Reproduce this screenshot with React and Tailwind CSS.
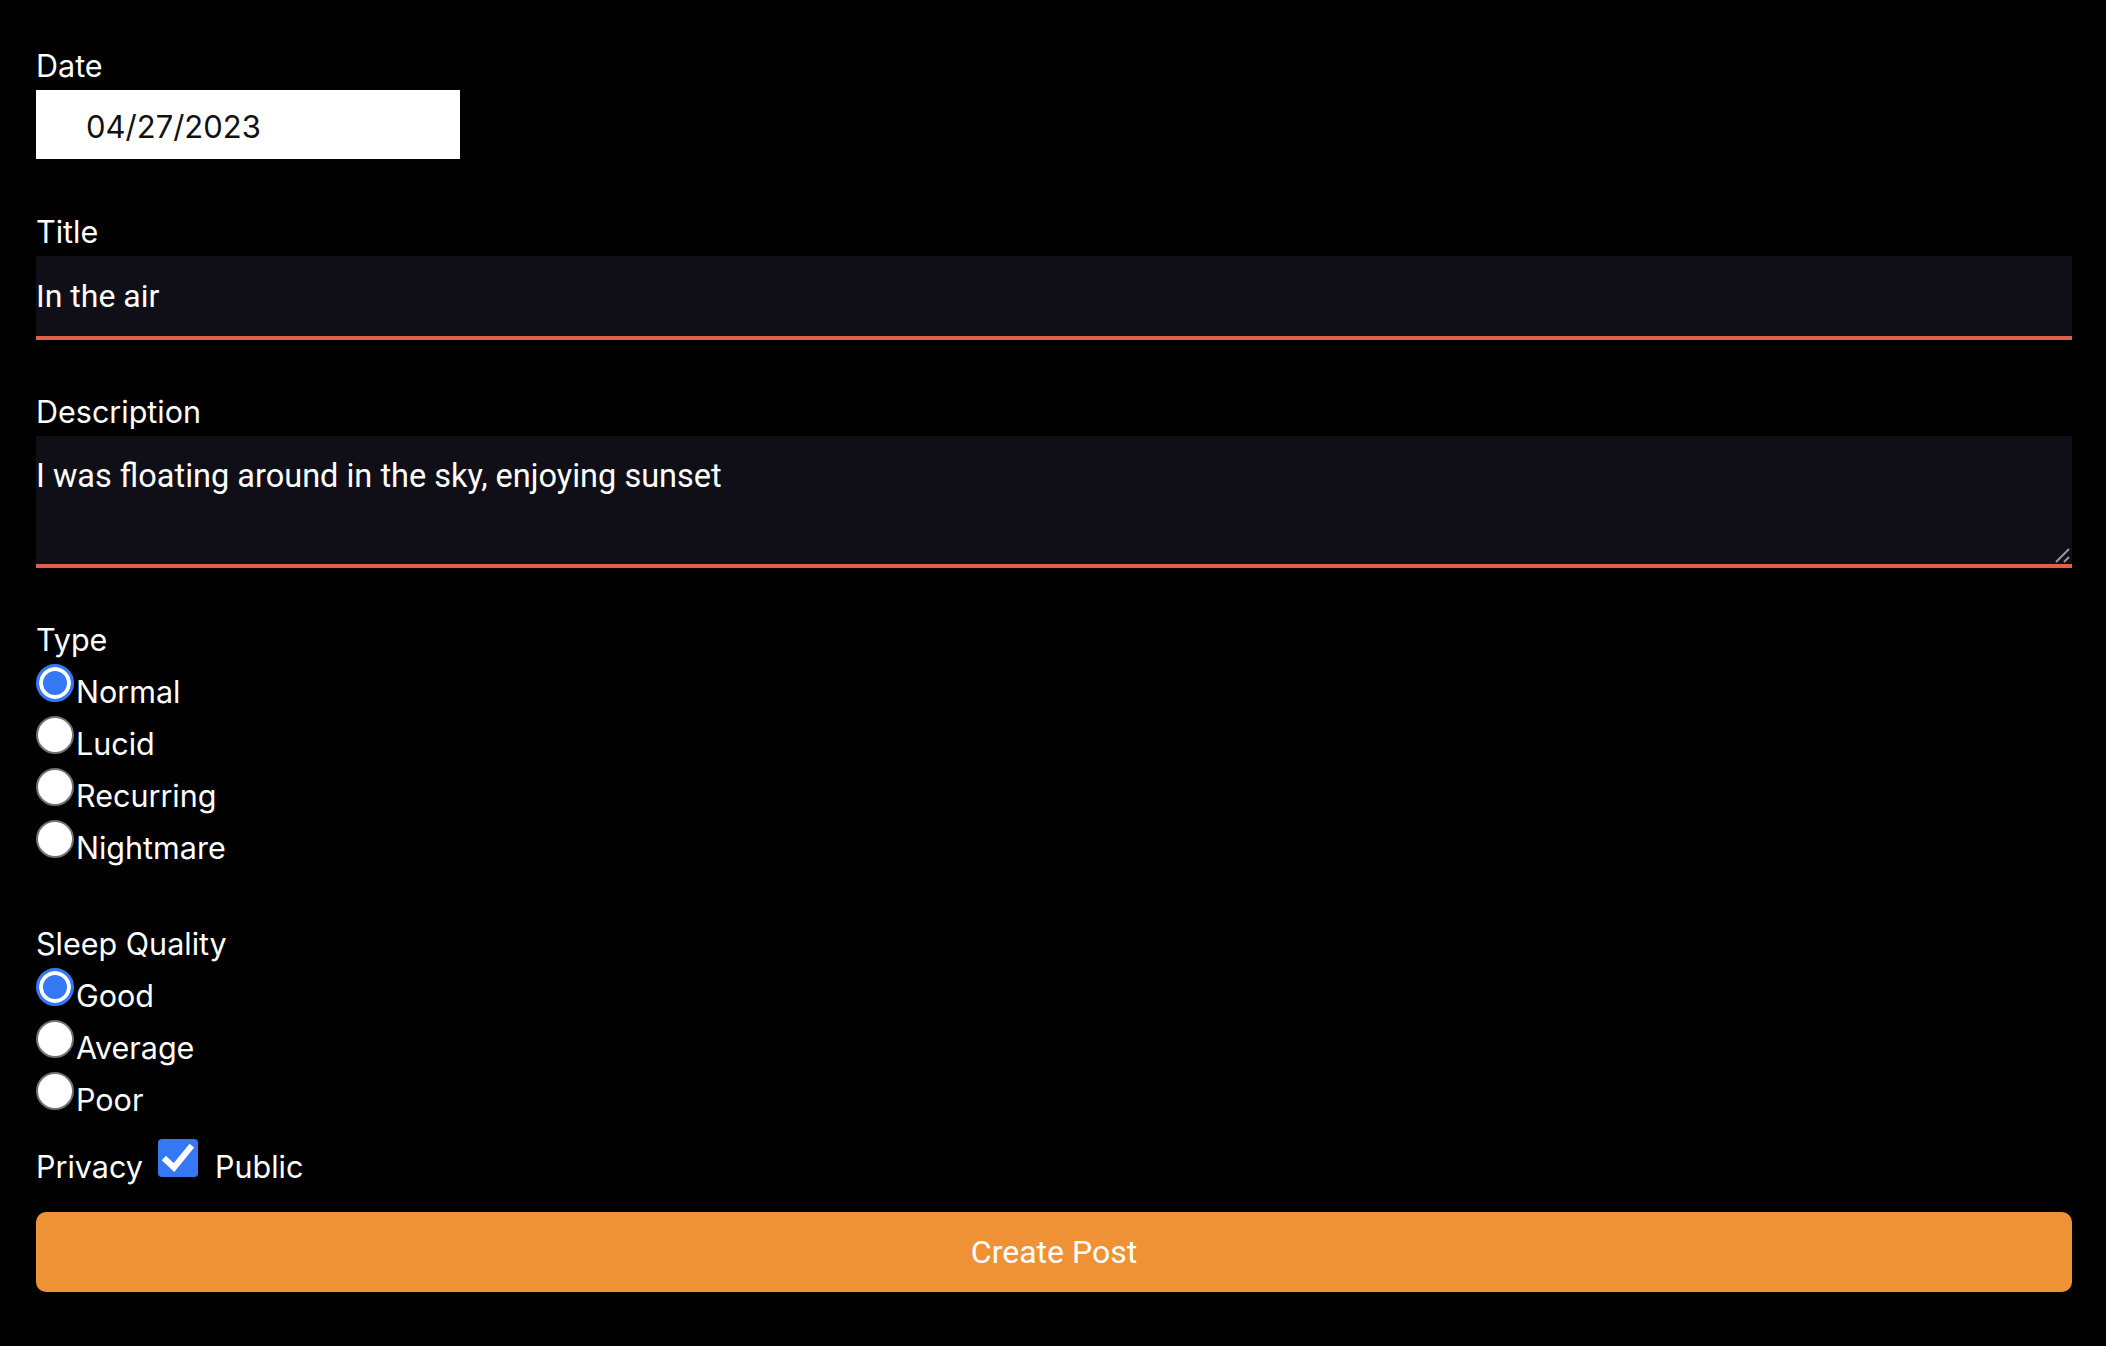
import React from "react";

function Radio({ label, checked, name }) {
  return (
    <label className="flex items-start h-[52px]">
      <input
        type="radio"
        name={name}
        defaultChecked={checked}
        className="appearance-none m-0 shrink-0 w-[38px] h-[38px] rounded-full bg-white border-2 border-[#707070] checked:border-[3px] checked:border-[#3478f6] checked:bg-[#3478f6] checked:shadow-[inset_0_0_0_4px_#ffffff]"
      />
      <span className="ml-[2px] mt-[4px] leading-[48px] text-[30.5px] text-white">{label}</span>
    </label>
  );
}

export default function App() {
  return (
    <div className="h-[1346px] overflow-hidden bg-black pl-[36px] pr-[34px] pt-[42px] font-[Inter,sans-serif] text-white">
      <div className="flex flex-col">
        <label className="text-[30.5px] leading-[48px]">Date</label>
        <input
          readOnly
          value="04/27/2023"
          className="w-[424px] h-[69px] bg-white text-[#111111] text-[31px] pl-[50px] pt-[3px] outline-none font-[Inter,sans-serif]"
        />

        <label className="mt-[49px] text-[30.5px] leading-[48px]">Title</label>
        <input
          defaultValue="In the air"
          className="w-full h-[84px] bg-[#100f17] border-b-4 border-[#e0604c] py-[16px] px-0 text-[32px] leading-[48px] text-white outline-none font-[Roboto,sans-serif]"
        />

        <label className="mt-[48px] text-[30.5px] leading-[48px]">Description</label>
        <div className="relative">
          <textarea
            rows={2}
            defaultValue="I was floating around in the sky, enjoying sunset"
            className="block w-full h-[132px] resize-none bg-[#100f17] border-b-4 border-[#e0604c] py-[16px] px-0 text-[32.5px] leading-[48px] text-white outline-none font-[Roboto,sans-serif]"
          />
          <svg className="absolute right-[2px] bottom-[5px] w-[16px] h-[16px]" viewBox="0 0 16 16">
            <line x1="2" y1="15" x2="15" y2="2" stroke="#9a9a9a" strokeWidth="2" />
            <line x1="10" y1="15" x2="15" y2="10" stroke="#9a9a9a" strokeWidth="2" />
          </svg>
        </div>

        <span className="mt-[48px] text-[30.5px] leading-[48px]">Type</span>
        <div className="flex flex-col">
          <Radio name="type" label="Normal" checked />
          <Radio name="type" label="Lucid" />
          <Radio name="type" label="Recurring" />
          <Radio name="type" label="Nightmare" />
        </div>

        <span className="mt-[48px] text-[30.5px] leading-[48px]">Sleep Quality</span>
        <div className="flex flex-col">
          <Radio name="sleep" label="Good" checked />
          <Radio name="sleep" label="Average" />
          <Radio name="sleep" label="Poor" />
        </div>

        <div className="mt-[15px] flex items-start">
          <span className="w-[122px] mt-[4px] text-[30.5px] leading-[48px]">Privacy</span>
          <span className="relative w-[40px] h-[38px] rounded-[4px] bg-[#3478f6] shrink-0">
            <svg className="absolute inset-0 w-[40px] h-[38px]" viewBox="0 0 40 38">
              <path d="M8 21 L16 28.5 L32 9" fill="none" stroke="#ffffff" strokeWidth="6" strokeLinecap="square" strokeLinejoin="miter" />
            </svg>
          </span>
          <span className="ml-[17px] mt-[4px] text-[30.5px] leading-[48px]">Public</span>
        </div>

        <button className="mt-[21px] h-[80px] w-full rounded-[10px] bg-[#ef9236] text-white text-[32px] font-[Roboto,sans-serif] flex items-center justify-center">
          Create Post
        </button>
      </div>
    </div>
  );
}
